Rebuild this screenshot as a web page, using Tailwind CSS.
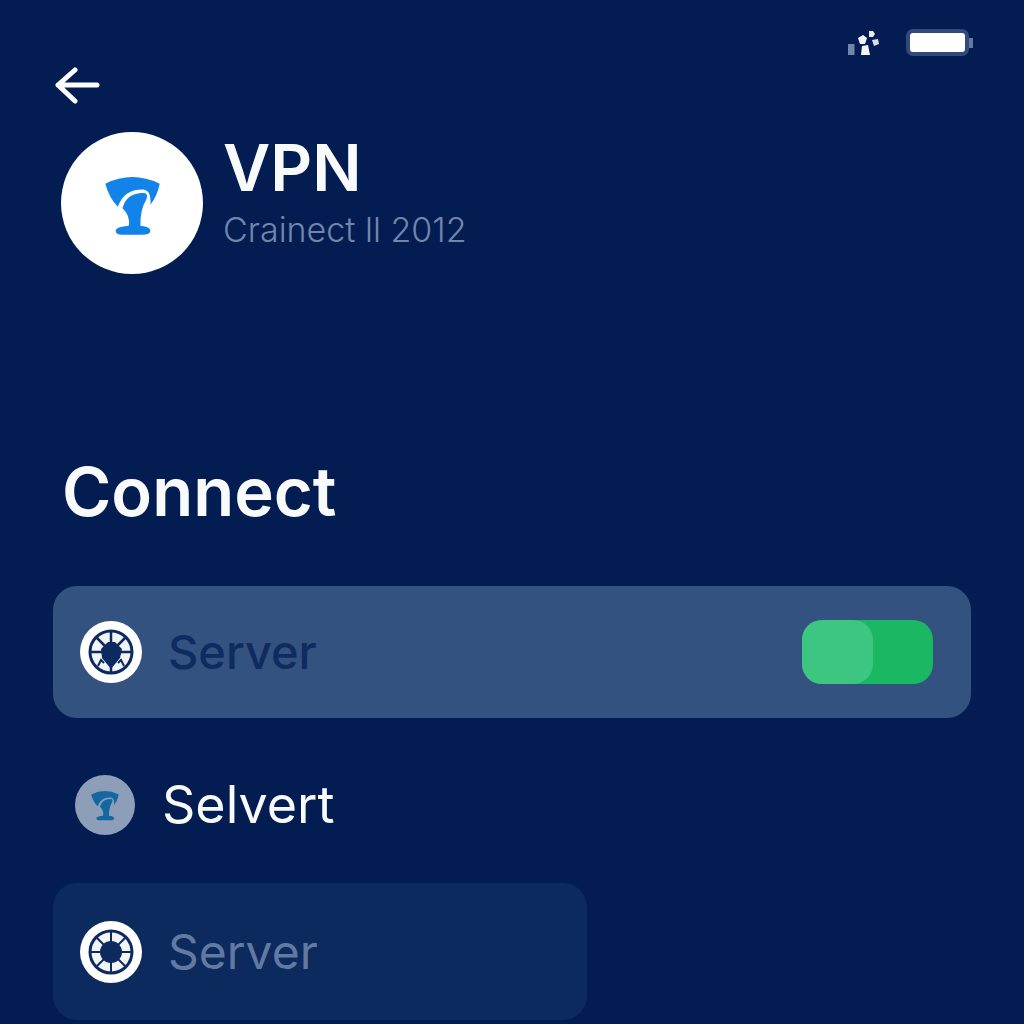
<!doctype html>
<html>
  <head>
    <title>VPN</title>
    <meta charset="UTF-8" />
    <script src="https://cdn.jsdelivr.net/npm/@tailwindcss/browser@4"></script>
  </head>
  <body class="h-[1024px] w-[1024px] overflow-hidden bg-[#031d52] font-['Inter',sans-serif] text-white">
    <!-- status bar -->
    <div class="flex h-[29px] items-start"></div>
    <div class="flex h-[27px] items-center justify-end gap-[27px] pr-[51px]">
      <svg class="h-[26px] w-[31px]" viewBox="0 0 31 26">
        <rect x="0" y="14" width="6.500" height="11" fill="#7186ab" />
        <path d="M14 16l6-1 2 10h-9z" fill="#f4f6fa" />
        <path d="M10 8l5-3 4 3-2 6-5 0z" fill="#f4f6fa" />
        <path d="M21 1h4l2 3-2 3h-4z" fill="#e6eaf2" />
        <path d="M24 10l6-1 1 5-5 2z" fill="#d7deea" />
      </svg>
      <div class="flex items-center">
        <div class="h-[27px] w-[63px] rounded-[7px] border-[4px] border-[#2f4a7b] bg-white"></div>
        <div class="h-[10px] w-[4px] bg-[#66799c]"></div>
      </div>
    </div>

    <!-- back arrow -->
    <div class="pl-[54px] pt-[11px]">
      <svg class="h-[38px] w-[46px]" viewBox="0 0 46 38" fill="none" stroke="#fff" stroke-width="5" stroke-linecap="round" stroke-linejoin="round">
        <path d="M43 18H4M21 3L4 18l17 16" />
      </svg>
    </div>

    <!-- header -->
    <div class="flex pl-[61px] pt-[27px]">
      <div class="flex h-[142px] w-[142px] items-center justify-center rounded-full bg-white">
        <svg class="mt-[4px] h-[61px] w-[57px]" viewBox="190 372 172 184"><path fill="#1283e8" d="M194 398Q275 358 358 398Q352 432 330 462Q334 420 310 416Q250 414 232 468Q205 440 194 398Z" /><path fill="#1283e8" d="M246 472Q258 424 312 426Q324 428 318 445Q298 478 300 525Q330 528 330 540Q330 552 305 552H245Q225 552 225 540Q225 528 265 525Q270 495 246 472Z" /></svg>
      </div>
      <div class="pl-[20px] pt-[2px]">
        <div class="text-[65px] leading-[68px] font-semibold text-[#f8fafc]">VPN</div>
        <div class="pt-[8px] text-[34px] leading-[40px] font-light text-[#7186ab]">Crainect ll 2012</div>
      </div>
    </div>

    <!-- connect -->
    <h1 class="pl-[62px] pt-[180px] text-[67px] leading-[76px] font-semibold text-[#f8fafc]">Connect</h1>

    <!-- selected row -->
    <div class="mx-[53px] mt-[56px] flex h-[132px] items-center justify-between rounded-[24px] bg-[#33527f] pl-[27px] pr-[38px]">
      <div class="flex items-center gap-[26px]">
        <svg class="h-[62px] w-[62px]" viewBox="0 0 62 62">
          <circle cx="31" cy="31" r="31" fill="#fff" />
          <circle cx="31" cy="31" r="21" fill="#f2f4f8" stroke="#0d2a5e" stroke-width="3" />
          <path d="M31 10v42M10 31h42M17 17l8 8M45 17l-8 8" stroke="#0d2a5e" stroke-width="2.500" />
          <path d="M18 45l3-6 3 3M44 45l-3-6-3 3" fill="none" stroke="#0d2a5e" stroke-width="2" />
          <path d="M21 28L28 21h7l7 7-2 9-9 11-9-11z" fill="#0d2a5e" />
        </svg>
        <span class="text-[47px] leading-[56px] font-medium text-[#0f2b62]">Server</span>
      </div>
      <div class="flex h-[64px] w-[131px] justify-start rounded-[20px] bg-[#1bb863]">
        <div class="h-[64px] w-[71px] rounded-[20px] bg-[#3cc681]"></div>
      </div>
    </div>

    <!-- second row -->
    <div class="flex items-center gap-[27px] pl-[75px] pt-[57px]">
      <div class="flex h-[60px] w-[60px] items-center justify-center rounded-full bg-[#8d9eb8]">
        <svg class="h-[31px] w-[30px]" viewBox="190 372 172 184"><path fill="#14689f" d="M194 398Q275 358 358 398Q352 432 330 462Q334 420 310 416Q250 414 232 468Q205 440 194 398Z" /><path fill="#14689f" d="M246 472Q258 424 312 426Q324 428 318 445Q298 478 300 525Q330 528 330 540Q330 552 305 552H245Q225 552 225 540Q225 528 265 525Q270 495 246 472Z" /></svg>
      </div>
      <span class="text-[52px] leading-[56px] text-[#f8fafc]">Selvert</span>
    </div>

    <!-- third row -->
    <div class="ml-[53px] mt-[48px] flex h-[137px] w-[534px] items-center gap-[26px] rounded-[24px] bg-[#0c2a5d] pl-[27px]">
      <svg class="h-[62px] w-[62px]" viewBox="0 0 62 62">
        <circle cx="31" cy="31" r="31" fill="#fff" />
        <circle cx="31" cy="31" r="21" fill="#f2f4f8" stroke="#0d2a5e" stroke-width="3" />
        <path d="M31 10v42M10 31h42M17 17l28 28M45 17L17 45" stroke="#0d2a5e" stroke-width="2" />
        <circle cx="31" cy="31" r="11" fill="#0d2a5e" />
      </svg>
      <span class="text-[48px] leading-[56px] text-[#627aa2]">Server</span>
    </div>
  </body>
</html>
